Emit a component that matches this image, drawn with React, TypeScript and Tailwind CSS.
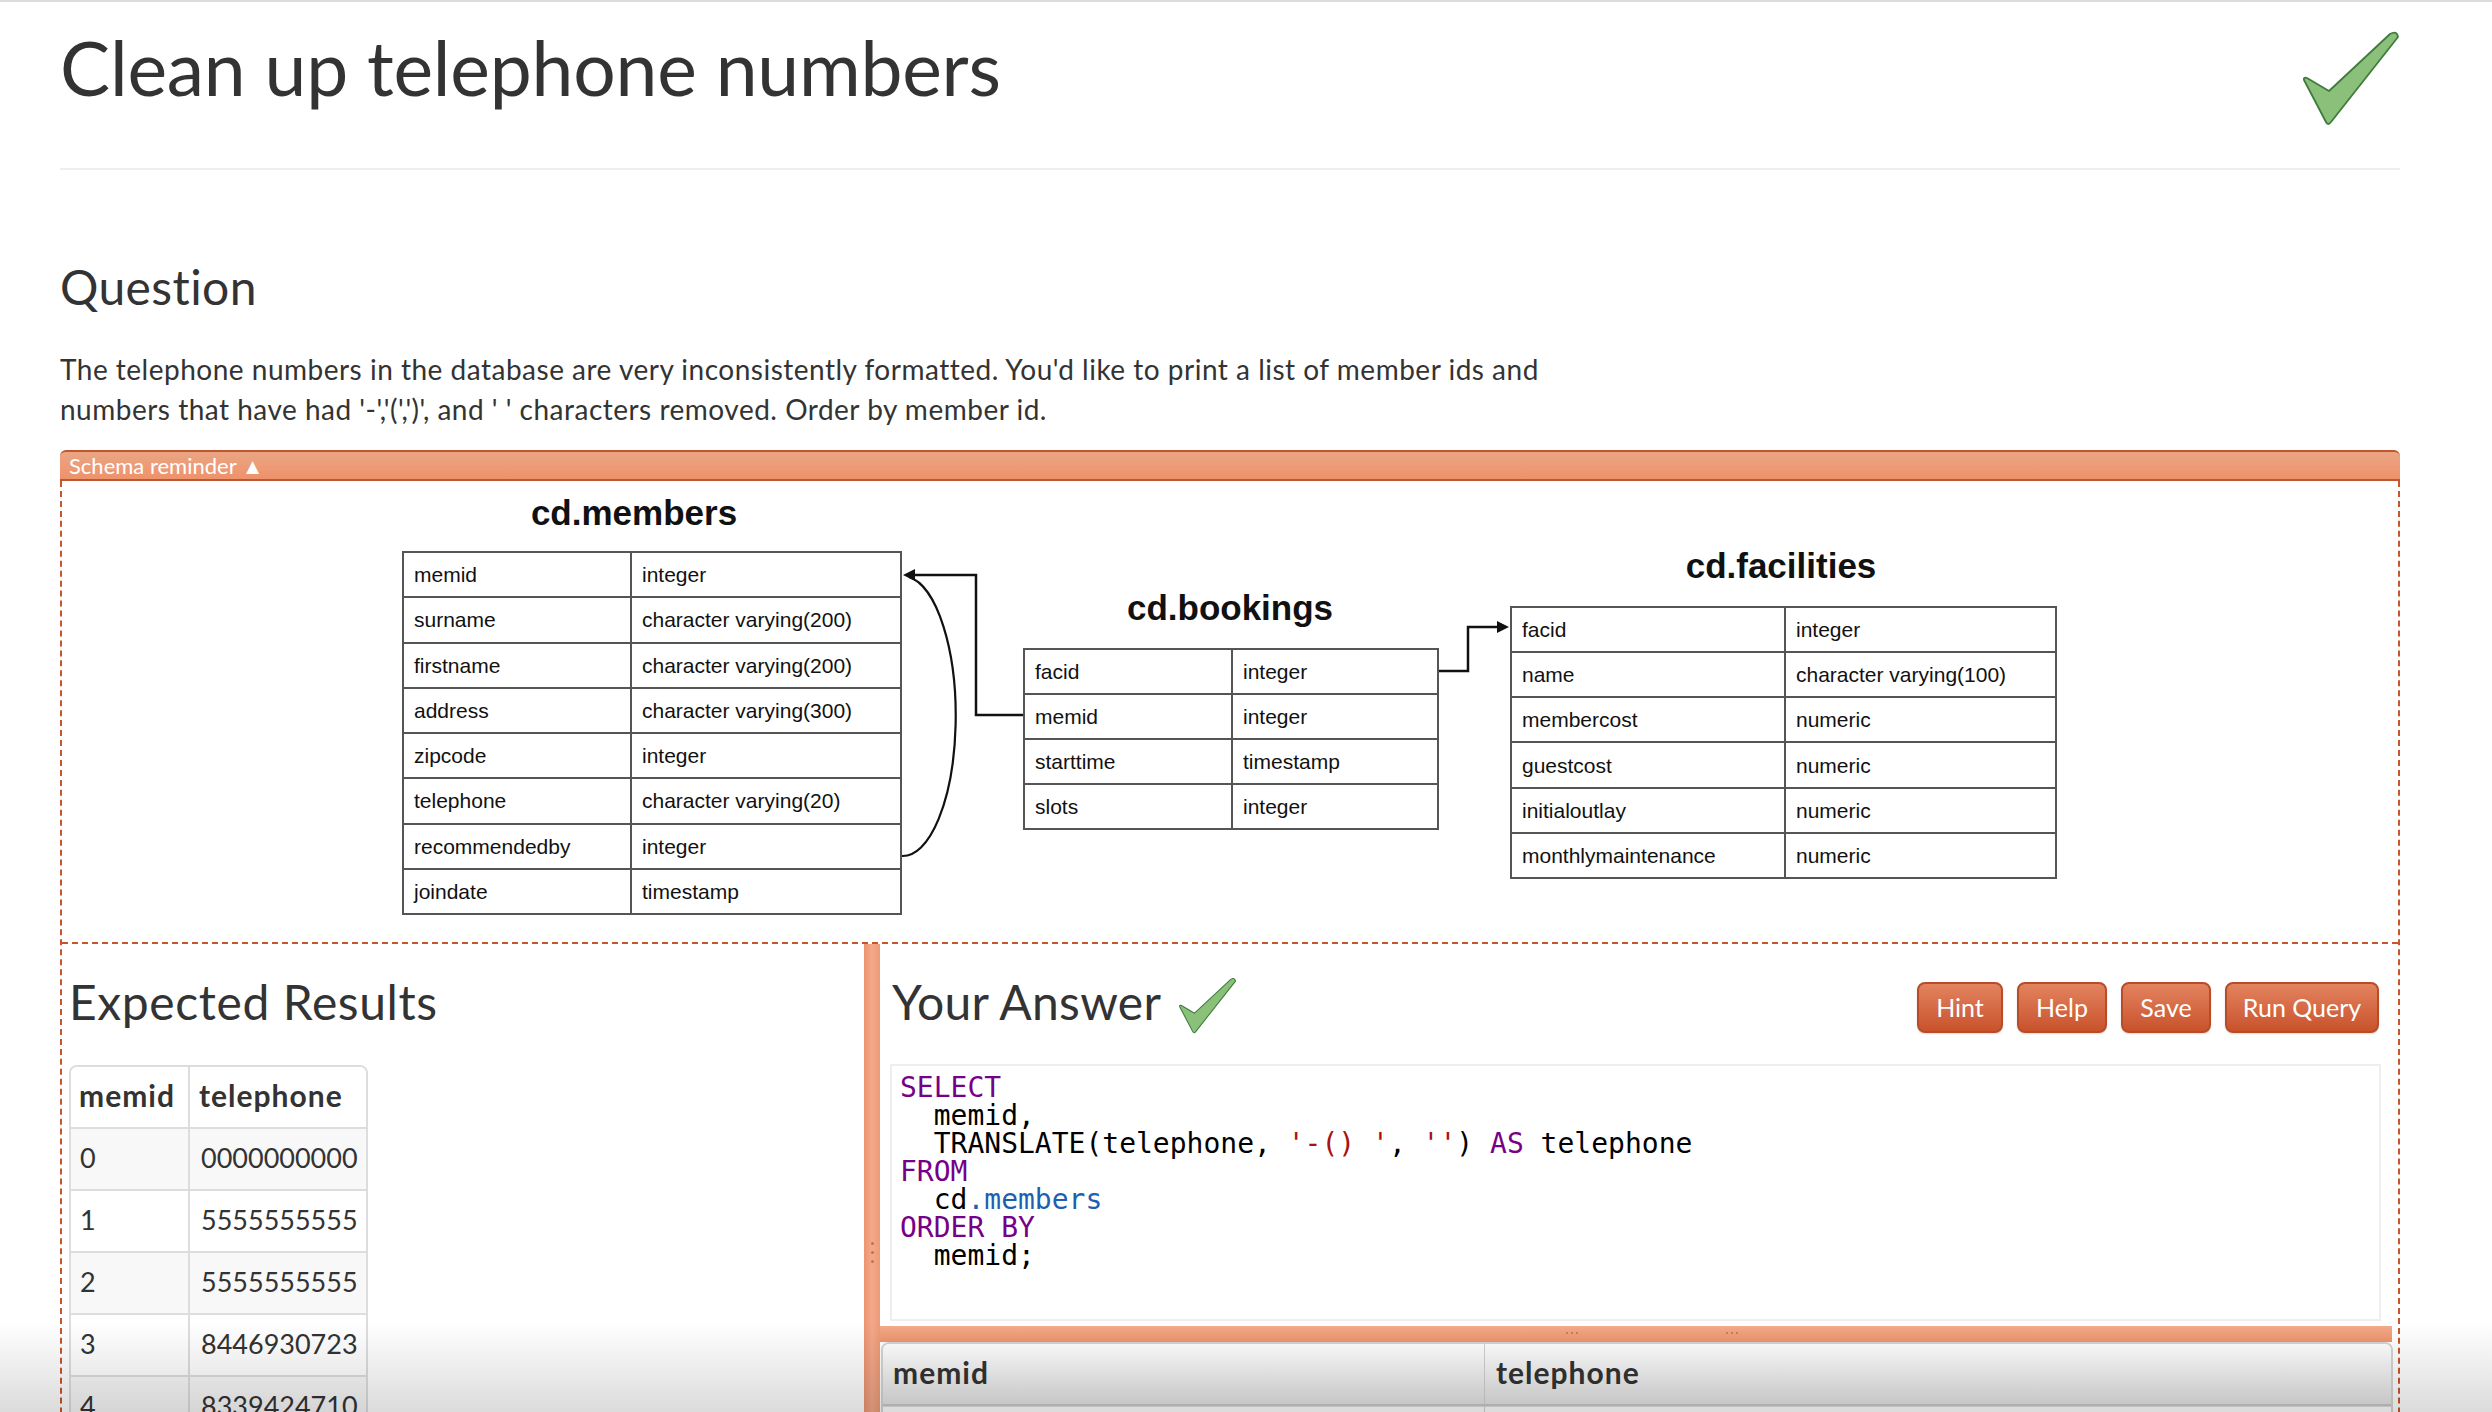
import React from "react";

const Check = ({ className }: { className: string }) => (
  <svg viewBox="0 0 100 96" className={className}>
    <path
      d="M4 50 Q3 47 7 48 L29 61 L90 4 Q97 0 98 7 L31 92 Q28 96 26 92 Z"
      fill="#8bc07a"
      stroke="#3f7c3c"
      strokeWidth="1.8"
      strokeLinejoin="round"
    />
  </svg>
);

type Row = [string, string];

const SchemaTable = ({ rows, className, col1 }: { rows: Row[]; className: string; col1: string }) => (
  <table
    className={`absolute border-collapse table-fixed font-['Liberation_Sans',Arial,sans-serif] text-[21px] text-[#111] ${className}`}
  >
    <colgroup>
      <col className={col1} />
      <col />
    </colgroup>
    <tbody>
      {rows.map(([a, b]) => (
        <tr key={a}>
          <td className="border-2 border-[#555] pl-[10px] py-0 leading-none">{a}</td>
          <td className="border-2 border-[#555] pl-[10px] py-0 leading-none">{b}</td>
        </tr>
      ))}
    </tbody>
  </table>
);

const members: Row[] = [
  ["memid", "integer"],
  ["surname", "character varying(200)"],
  ["firstname", "character varying(200)"],
  ["address", "character varying(300)"],
  ["zipcode", "integer"],
  ["telephone", "character varying(20)"],
  ["recommendedby", "integer"],
  ["joindate", "timestamp"],
];

const bookings: Row[] = [
  ["facid", "integer"],
  ["memid", "integer"],
  ["starttime", "timestamp"],
  ["slots", "integer"],
];

const facilities: Row[] = [
  ["facid", "integer"],
  ["name", "character varying(100)"],
  ["membercost", "numeric"],
  ["guestcost", "numeric"],
  ["initialoutlay", "numeric"],
  ["monthlymaintenance", "numeric"],
];

const expected: Row[] = [
  ["0", "0000000000"],
  ["1", "5555555555"],
  ["2", "5555555555"],
  ["3", "8446930723"],
  ["4", "8339424710"],
  ["5", "8440784130"],
  ["6", "8223549973"],
];

const K = ({ children }: { children: React.ReactNode }) => <span className="text-[#770088]">{children}</span>;
const S = ({ children }: { children: React.ReactNode }) => <span className="text-[#aa1111]">{children}</span>;

const Button = ({ label, w }: { label: string; w: string }) => (
  <button
    className={`${w} h-[51px] rounded-[8px] border-2 border-[#b94c26] bg-linear-to-b from-[#e3835f] to-[#c8522b] text-white text-[25px] leading-none shadow-[0_1px_2px_rgba(0,0,0,0.15)]`}
  >
    {label}
  </button>
);

export default function App() {
  return (
    <div className="relative w-[2492px] h-[1412px] overflow-hidden bg-white border-t-2 border-[#dcdcdc] font-['Lato',sans-serif] text-[#333]">
      <div className="ml-[60px] w-[2340px]">
        {/* header */}
        <div className="flex justify-between items-start pt-[20px] h-[166px]">
          <h1 className="text-[75px] leading-[91px] font-normal tracking-[-0.2px]">Clean up telephone numbers</h1>
          <Check className="w-[100px] h-[96px] mt-[8px]" />
        </div>
        <div className="h-[2px] bg-[#eeeeee]" />

        <h2 className="mt-[88px] text-[48px] leading-[58px] tracking-[0.4px]">Question</h2>
        <p className="mt-[33px] text-[28px] leading-[40px] whitespace-nowrap tracking-[0.5px]">
          The telephone numbers in the database are very inconsistently formatted. You'd like to print a list of member ids and
          <br />
          numbers that have had '-','(',')', and ' ' characters removed. Order by member id.
        </p>

        {/* schema reminder bar */}
        <div className="mt-[21px] h-[31px] rounded-t-[6px] border-y-2 border-[#c0562f] bg-linear-to-b from-[#eaa584] to-[#ee926a] pl-[9px] text-[22px] leading-[27px] text-white">
          Schema reminder ▲
        </div>

        {/* dashed box */}
        <div className="border-x-2 border-dashed border-[#c9552c]">
          {/* diagram */}
          <div className="relative h-[461px]">
            <div className="absolute left-[422px] top-[14px] w-[300px] text-center font-['Liberation_Sans',Arial,sans-serif] font-bold text-[35px] leading-[35px] text-[#111]">
              cd.members
            </div>
            <div className="absolute left-[1018px] top-[109px] w-[300px] text-center font-['Liberation_Sans',Arial,sans-serif] font-bold text-[35px] leading-[35px] text-[#111]">
              cd.bookings
            </div>
            <div className="absolute left-[1569px] top-[67px] w-[300px] text-center font-['Liberation_Sans',Arial,sans-serif] font-bold text-[35px] leading-[35px] text-[#111]">
              cd.facilities
            </div>
            <SchemaTable rows={members} className="left-[340px] top-[70px] w-[500px] h-[364px]" col1="w-[228px]" />
            <SchemaTable rows={bookings} className="left-[961px] top-[167px] w-[416px] h-[182px]" col1="w-[208px]" />
            <SchemaTable rows={facilities} className="left-[1448px] top-[125px] w-[547px] h-[273px]" col1="w-[274px]" />
            <svg className="absolute inset-0 w-full h-full" fill="none">
              <path d="M 961 234 H 914 V 94 H 850" stroke="#111" strokeWidth="2.5" />
              <path d="M 840 375 A 53 140 0 0 0 847 96" stroke="#111" strokeWidth="2.2" />
              <polygon points="841,94 853,88 853,100" fill="#111" />
              <path d="M 1377 190 H 1406 V 146 H 1438" stroke="#111" strokeWidth="2.5" />
              <polygon points="1447,146 1435,140 1435,152" fill="#111" />
            </svg>
          </div>
          <div className="border-t-2 border-dashed border-[#c9552c]" />

          {/* bottom section */}
          <div className="flex">
            {/* expected results */}
            <div className="w-[802px] shrink-0 pt-[29px] pl-[7px]">
              <h2 className="text-[48px] leading-[58px] tracking-[0.6px]">Expected Results</h2>
              <div className="mt-[34px] w-[299px] rounded-[8px] border-2 border-[#dddddd] overflow-hidden text-[27px] leading-[40px]">
                <div className="flex h-[60px] bg-white font-bold text-[30px] tracking-[1px]">
                  <div className="w-[119px] shrink-0 px-[8px] pt-[8px] border-r-2 border-[#dddddd]">memid</div>
                  <div className="flex-1 px-[9px] pt-[8px]">telephone</div>
                </div>
                {expected.map(([a, b], i) => (
                  <div
                    key={a}
                    className={`flex h-[62px] border-t-2 border-[#dddddd] ${i % 2 === 0 ? "bg-[#f8f8f8]" : "bg-white"}`}
                  >
                    <div className="w-[119px] shrink-0 px-[9px] pt-[9px] border-r-2 border-[#dddddd]">{a}</div>
                    <div className="flex-1 pl-[11px] pt-[9px]">{b}</div>
                  </div>
                ))}
              </div>
            </div>

            {/* vertical splitter */}
            <div className="w-[16px] shrink-0 bg-linear-to-r from-[#ec9470] via-[#f3a98a] to-[#ee9a76] flex flex-col items-center pt-[298px] gap-[6px]">
              <div className="w-[3px] h-[3px] rounded-full bg-[#c9704d]" />
              <div className="w-[3px] h-[3px] rounded-full bg-[#c9704d]" />
              <div className="w-[3px] h-[3px] rounded-full bg-[#c9704d]" />
            </div>

            {/* your answer */}
            <div className="flex-1 flex flex-col">
              <div className="shrink-0 flex justify-between items-start pt-[29px] pl-[12px] pr-[19px]">
                <div className="flex items-start">
                  <h2 className="text-[48px] leading-[58px] tracking-[0.3px]">Your Answer</h2>
                  <Check className="w-[60px] h-[57px] ml-[16px] mt-[4px]" />
                </div>
                <div className="flex gap-[14px] mt-[9px]">
                  <Button label="Hint" w="w-[86px]" />
                  <Button label="Help" w="w-[90px]" />
                  <Button label="Save" w="w-[90px]" />
                  <Button label="Run Query" w="w-[154px]" />
                </div>
              </div>
              <div className="shrink-0 mt-[30px] ml-[10px] mr-[17px] h-[257px] border-2 border-[#eeeeee] bg-white px-[8px] pt-[8px] font-['DejaVu_Sans_Mono',monospace] text-[28px] leading-[28px] text-black whitespace-pre">
                <div><K>SELECT</K></div>
                <div>{"  memid,"}</div>
                <div>
                  {"  TRANSLATE(telephone, "}
                  <S>'-() '</S>
                  {", "}
                  <S>''</S>
                  {") "}
                  <K>AS</K>
                  {" telephone"}
                </div>
                <div><K>FROM</K></div>
                <div>
                  {"  cd"}
                  <span className="text-[#1f5fb0]">.members</span>
                </div>
                <div><K>ORDER BY</K></div>
                <div>{"  memid;"}</div>
              </div>
              {/* horizontal splitter */}
              <div className="shrink-0 mt-[5px] mr-[6px] h-[16px] bg-linear-to-b from-[#f3ab8c] to-[#ee946d] relative">
                <div className="absolute left-[686px] top-[6px] flex gap-[3px]">
                  <div className="w-[2px] h-[2px] bg-[#d07a56]" />
                  <div className="w-[2px] h-[2px] bg-[#d07a56]" />
                  <div className="w-[2px] h-[2px] bg-[#d07a56]" />
                </div>
                <div className="absolute left-[846px] top-[6px] flex gap-[3px]">
                  <div className="w-[2px] h-[2px] bg-[#d07a56]" />
                  <div className="w-[2px] h-[2px] bg-[#d07a56]" />
                  <div className="w-[2px] h-[2px] bg-[#d07a56]" />
                </div>
              </div>
              {/* results table */}
              <div className="shrink-0 ml-[1px] mr-[5px] rounded-t-[8px] border-2 border-[#d4d4d4] overflow-hidden text-[28px] leading-[40px]">
                <div className="flex h-[62px] bg-linear-to-b from-white to-[#e4e4e4] font-bold text-[30px] tracking-[1px] border-b-2 border-[#c8c8c8]">
                  <div className="w-[602px] shrink-0 px-[10px] pt-[8px] border-r border-[#d0d0d0]">memid</div>
                  <div className="flex-1 px-[11px] pt-[8px]">telephone</div>
                </div>
                {expected.map(([a, b]) => (
                  <div key={a} className="flex h-[62px] border-t border-[#dddddd] bg-white">
                    <div className="w-[602px] shrink-0 px-[10px] pt-[11px] border-r border-[#d0d0d0]">{a}</div>
                    <div className="flex-1 px-[11px] pt-[11px]">{b}</div>
                  </div>
                ))}
              </div>
            </div>
          </div>
        </div>
      </div>
      {/* bottom fade */}
      <div className="pointer-events-none absolute left-0 right-0 bottom-0 h-[90px] bg-linear-to-b from-transparent to-[rgba(0,0,0,0.14)]" />
    </div>
  );
}
